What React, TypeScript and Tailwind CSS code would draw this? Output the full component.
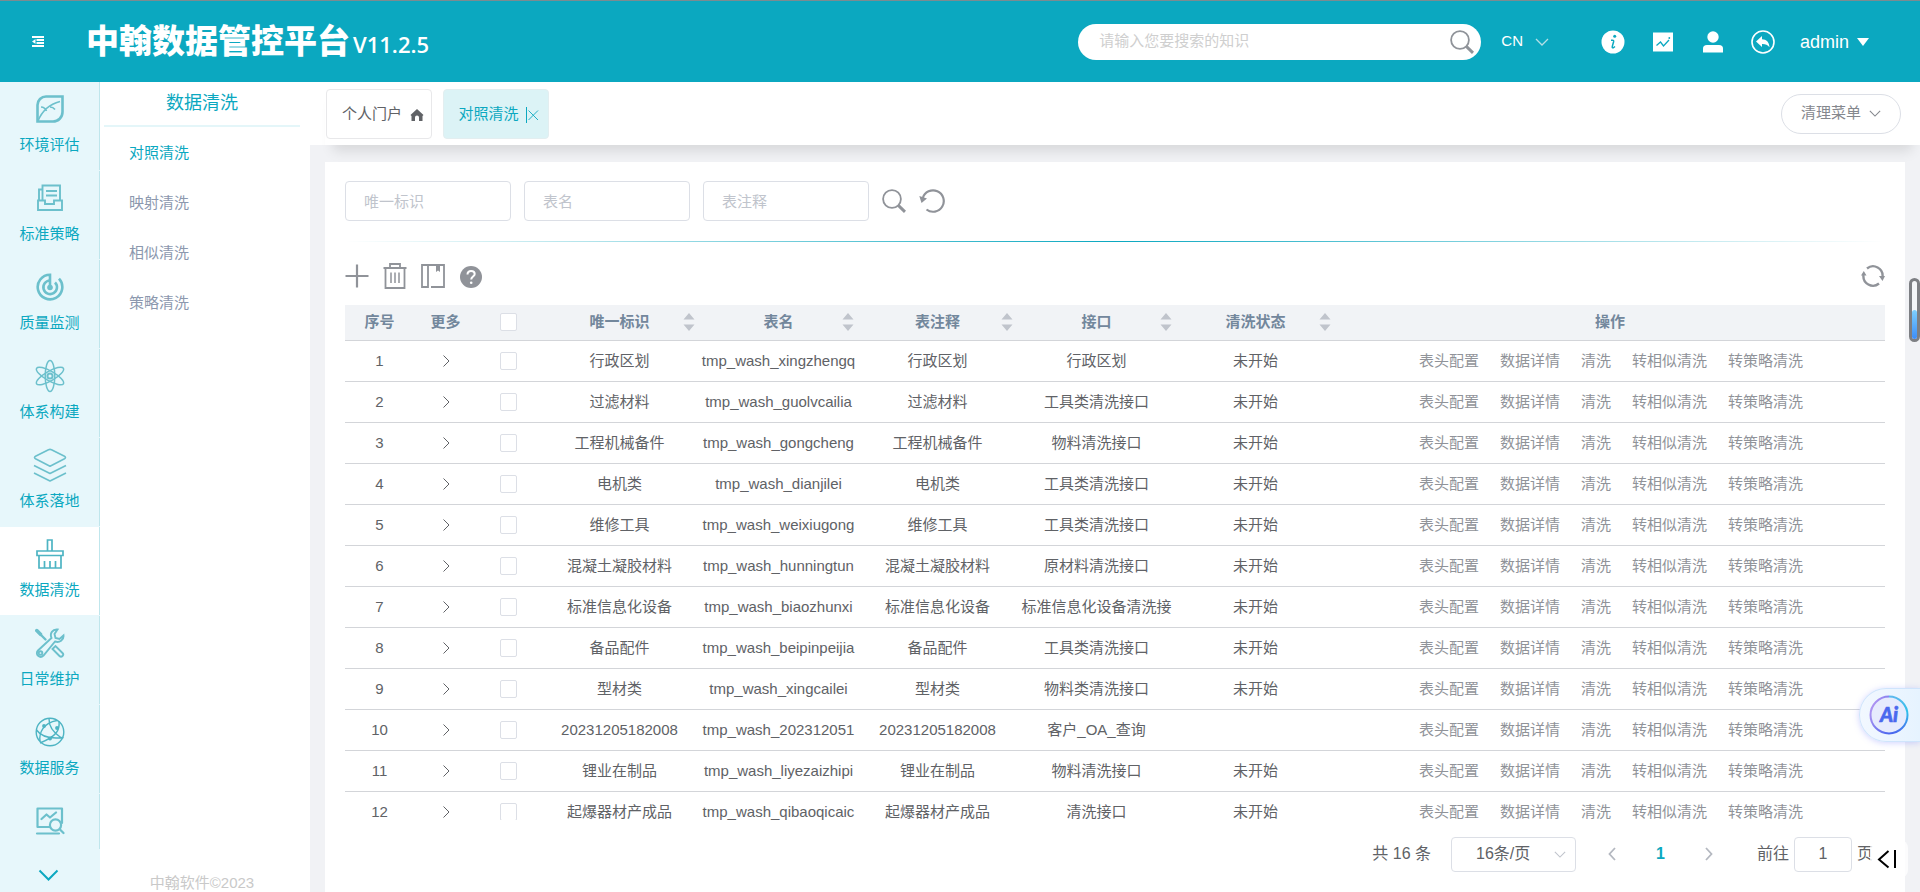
import React, { useState } from 'react';

interface WashRow {
  id: string;
  table: string;
  note: string;
  api: string;
  status: string;
}

const rows: WashRow[] = [
  { id: '行政区划', table: 'tmp_wash_xingzhengq', note: '行政区划', api: '行政区划', status: '未开始' },
  { id: '过滤材料', table: 'tmp_wash_guolvcailia', note: '过滤材料', api: '工具类清洗接口', status: '未开始' },
  { id: '工程机械备件', table: 'tmp_wash_gongcheng', note: '工程机械备件', api: '物料清洗接口', status: '未开始' },
  { id: '电机类', table: 'tmp_wash_dianjilei', note: '电机类', api: '工具类清洗接口', status: '未开始' },
  { id: '维修工具', table: 'tmp_wash_weixiugong', note: '维修工具', api: '工具类清洗接口', status: '未开始' },
  { id: '混凝土凝胶材料', table: 'tmp_wash_hunningtun', note: '混凝土凝胶材料', api: '原材料清洗接口', status: '未开始' },
  { id: '标准信息化设备', table: 'tmp_wash_biaozhunxi', note: '标准信息化设备', api: '标准信息化设备清洗接', status: '未开始' },
  { id: '备品配件', table: 'tmp_wash_beipinpeijia', note: '备品配件', api: '工具类清洗接口', status: '未开始' },
  { id: '型材类', table: 'tmp_wash_xingcailei', note: '型材类', api: '物料类清洗接口', status: '未开始' },
  { id: '20231205182008', table: 'tmp_wash_202312051', note: '20231205182008', api: '客户_OA_查询', status: '' },
  { id: '锂业在制品', table: 'tmp_wash_liyezaizhipi', note: '锂业在制品', api: '物料清洗接口', status: '未开始' },
  { id: '起爆器材产成品', table: 'tmp_wash_qibaoqicaic', note: '起爆器材产成品', api: '清洗接口', status: '未开始' },
];

const columns = ['唯一标识', '表名', '表注释', '接口', '清洗状态'];
const actions = ['表头配置', '数据详情', '清洗', '转相似清洗', '转策略清洗'];
const subMenus = ['对照清洗', '映射清洗', '相似清洗', '策略清洗'];

const LeafIcon = () => (
  <svg viewBox="0 0 28 28" className="size-7" fill="none" stroke="currentColor">
    <path d="M1.500 26.500V10a8.500 8.500 0 0 1 8.500-8.500h16.500V17a9.500 9.500 0 0 1-9.500 9.500z" strokeWidth="2.600" />
    <path d="M2 26C6 16 12 9.500 24 6.500M5 12c3 0 4.500 1.500 5.500 4M14 12c2 0 3.500.5 5 2.500" strokeWidth="1.600" />
  </svg>
);

const InboxIcon = () => (
  <svg viewBox="0 0 28 28" className="size-7" fill="none" stroke="currentColor" strokeWidth="1.900">
    <path d="M2 16.500h7v3.500h9v-3.500h8V26H2zM6.500 16V1.500H24V16M6.500 5.500H3V16M10 7h11M10 11.500h11" />
  </svg>
);

const RadarIcon = () => (
  <svg viewBox="0 0 28 28" className="size-7" fill="none" stroke="currentColor" strokeWidth="2.600">
    <path d="M14 14V1.700A12.300 12.300 0 1 0 23 5.600" />
    <path d="M14 7.500a6.800 6.800 0 1 0 5 2" />
    <circle cx="14" cy="14.500" r="2.800" fill="currentColor" stroke="none" />
  </svg>
);

const AtomIcon = () => (
  <svg viewBox="0 0 32 34" className="h-[34px] w-8" fill="none" stroke="currentColor" strokeWidth="1.500">
    <ellipse cx="16" cy="17" rx="4.800" ry="15.500" />
    <ellipse cx="16" cy="17" rx="4.800" ry="15.500" transform="rotate(60 16 17)" />
    <ellipse cx="16" cy="17" rx="4.800" ry="15.500" transform="rotate(120 16 17)" />
    <circle cx="16" cy="17" r="2.600" strokeWidth="2" />
  </svg>
);

const LayersIcon = () => (
  <svg viewBox="0 0 34 34" className="size-[34px]" fill="none" stroke="currentColor" strokeWidth="1.600" strokeLinejoin="round">
    <path d="M15.500 1.700 2.500 8.300q-2 1.200 0 2.400L17 18.300l14.500-7.600q2-1.200 0-2.400L18.500 1.700q-1.500-.7-3 0zM1 17.500l16 8 16-8M1 25l16 8 16-8" />
  </svg>
);

const BrushIcon = () => (
  <svg viewBox="0 0 28 30" className="h-[30px] w-7 text-[#4db4c3]" fill="none" stroke="currentColor" strokeWidth="1.700">
    <path d="M11.500 12V1h4.500v11M1 12h26v4.500H1zM3 16.500h22V29H3zM8.500 22v7M14 22v7M19.500 22v7" />
  </svg>
);

const ToolsIcon = () => (
  <svg viewBox="0 0 30 30" className="size-[30px]" fill="none" stroke="currentColor" strokeWidth="1.900" strokeLinecap="round">
    <path d="M22.500 1.500c-5-.5-8 4-6 8.500L3 22.500c-3.500 4 2 8.500 5.500 5L20 13.500c4.500 1.500 9-1.500 8.500-6l-4 3.500-4-1-1-4z" />
    <circle cx="5.500" cy="25" r="1.800" />
    <path d="m3 4 7.500 7.500" strokeWidth="2.400" />
    <path d="m1.800 2.600 3.700 3.700" strokeWidth="3.500" />
    <path d="m17.500 21 3-3 7 7c2 2-1 5-3 3z" />
  </svg>
);

const GlobeIcon = () => (
  <svg viewBox="0 0 30 30" className="size-[30px] text-[#4db4c3]" fill="none" stroke="currentColor" strokeWidth="1.400">
    <circle cx="15" cy="15" r="13.800" />
    <path d="M14 1.500c-.5 8 4 14 13 20M24 4c1 9-2 15-19 22M5 24C4 16 8 6 22 3.500M1.500 13c5 7 15 9 27 7.500" />
    <circle cx="9" cy="9" r="1.900" fill="currentColor" stroke="none" />
    <circle cx="22" cy="11" r="1.900" fill="currentColor" stroke="none" />
    <circle cx="15" cy="21.500" r="2" fill="currentColor" stroke="none" />
  </svg>
);

const ReportIcon = () => (
  <svg viewBox="0 0 30 30" className="size-[30px]" fill="none" stroke="currentColor" strokeWidth="2.200" strokeLinecap="round" strokeLinejoin="round">
    <path d="M15 21H2.500V2.500H27V17M6.500 13l5-4.500 3.500 3L21 6.500M2 27.500h22M25 23.500l3.500 3.500" />
    <circle cx="20.500" cy="19" r="5.600" />
  </svg>
);

const sideItems: { label: string; Icon: () => React.JSX.Element }[] = [
  { label: '环境评估', Icon: LeafIcon },
  { label: '标准策略', Icon: InboxIcon },
  { label: '质量监测', Icon: RadarIcon },
  { label: '体系构建', Icon: AtomIcon },
  { label: '体系落地', Icon: LayersIcon },
  { label: '数据清洗', Icon: BrushIcon },
  { label: '日常维护', Icon: ToolsIcon },
  { label: '数据服务', Icon: GlobeIcon },
];

const SearchIcon = () => (
  <svg viewBox="0 0 24 24" className="size-6" fill="none" stroke="currentColor">
    <circle cx="10" cy="10" r="8.900" strokeWidth="1.800" />
    <path d="m16.300 16.300 6.700 6.500" strokeWidth="3" />
  </svg>
);

const Chevron = ({ className }: { className: string }) => (
  <svg viewBox="0 0 14 8" className={className} fill="none" stroke="currentColor" strokeWidth="1.300">
    <path d="m1 1 6 6 6-6" />
  </svg>
);

const SortCaret = () => (
  <svg viewBox="0 0 12 18" className="h-[18px] w-3 shrink-0 fill-[#c0c4cc]">
    <path d="M6 0l5.500 6.500H.5zM6 18l5.500-6.500H.5z" />
  </svg>
);

function Header() {
  return (
    <header className="flex h-[82px] shrink-0 items-center border-t border-[#7c8b90] bg-[#0ba8c0] text-white">
      <button aria-label="折叠菜单" className="ml-8 shrink-0">
        <svg viewBox="0 0 12 11" className="h-[11px] w-3" fill="none" stroke="currentColor" strokeWidth="1.800">
          <path d="M0 1h12M4.500 4h7.500M4.500 7h7.500M0 10h12" />
          <path d="M3.500 3v5L0 5.500z" fill="currentColor" stroke="none" />
        </svg>
      </button>
      <h1 className="mt-[2px] ml-[42px] flex items-baseline gap-[3px] whitespace-nowrap text-[33px] leading-10 font-black">
        中翰数据管控平台
        <span className="font-['Open_Sans',sans-serif] text-[22px] font-semibold">V11.2.5</span>
      </h1>
      <div className="ml-auto flex h-9 w-[403px] items-center rounded-full bg-white pr-[7px] pl-[21px]">
        <input
          aria-label="搜索知识"
          placeholder="请输入您要搜索的知识"
          className="min-w-0 flex-1 text-[15px] text-[#606266] outline-none placeholder:text-[#cfcfcf]"
        />
        <button aria-label="搜索" className="text-[#8f9399]"><SearchIcon /></button>
      </div>
      <button className="ml-5 flex items-center gap-3 text-[15px]">
        CN
        <Chevron className="h-2 w-[14px] text-[#b5dfe6]" />
      </button>
      <nav className="ml-[52px] flex items-center gap-[26px]">
        <button aria-label="信息">
          <svg viewBox="0 0 24 24" className="size-6">
            <circle cx="12" cy="12" r="11.500" fill="#fff" />
            <circle cx="13.700" cy="6.300" r="1.500" fill="#0ba8c0" />
            <path d="M10 10.200h1.500q1.500 0 1.100 1.600l-1.300 4.600q-.4 1.600 1 1.400l1.700-1.300" fill="none" stroke="#0ba8c0" strokeWidth="1.500" />
          </svg>
        </button>
        <button aria-label="统计">
          <svg viewBox="0 0 24 24" className="size-6">
            <path d="M2 2.500h20v19H2z" fill="#fff" />
            <path d="m5.500 15.500 4-3.500 3 4 5.500-6" fill="none" stroke="#0ba8c0" strokeWidth="1.300" />
            <circle cx="18.300" cy="8" r=".9" fill="#0ba8c0" />
          </svg>
        </button>
        <button aria-label="用户">
          <svg viewBox="0 0 24 24" className="size-6" fill="#fff">
            <circle cx="12" cy="7" r="5.700" />
            <path d="M2 22.500V18.500q0-3.500 4-3.500h12q4 0 4 3.500v4z" />
          </svg>
        </button>
        <button aria-label="返回">
          <svg viewBox="0 0 24 24" className="size-6">
            <circle cx="12" cy="12" r="11" fill="none" stroke="#fff" strokeWidth="1.600" />
            <path d="m5 11.500 6-5.500v3.300c4.500.2 7 2.700 7.500 8-2-2.500-4-3.500-7.500-3.400V17z" fill="#fff" />
          </svg>
        </button>
      </nav>
      <button className="mr-[51px] ml-[25px] flex items-center gap-2 text-lg">
        admin
        <svg viewBox="0 0 12 8" className="h-2 w-3 fill-white"><path d="M0 0h12L6 8z" /></svg>
      </button>
    </header>
  );
}

function Sidebar() {
  return (
    <aside className="flex w-[100px] shrink-0 flex-col bg-[#e7f7fb]">
      <nav className="min-h-0 flex-1 overflow-hidden">
        {sideItems.map(({ label, Icon }) => (
          <a
            key={label}
            href="#"
            className={`mb-px flex h-[88px] flex-col items-center border-r border-[#bfe6ec] pt-[9px] text-[#6cc0cc] ${
              label === '数据清洗' ? 'bg-white' : ''
            }`}
          >
            <span className="flex h-9 items-center"><Icon /></span>
            <span className="mt-2 text-[15px] leading-5 text-[#0ba8c0]">{label}</span>
          </a>
        ))}
        <a href="#" aria-label="数据报告" className="flex h-[88px] flex-col items-center border-r border-[#bfe6ec] pt-[9px] text-[#6cc0cc]">
          <span className="flex h-9 items-center"><ReportIcon /></span>
        </a>
      </nav>
      <button aria-label="更多菜单" className="flex h-[43px] items-center justify-center pt-[9px] pr-[3px] text-[#0ba8c0]">
        <Chevron className="h-3 w-[21px]" />
      </button>
    </aside>
  );
}

function SubMenu() {
  return (
    <aside className="flex w-[210px] shrink-0 flex-col bg-white">
      <h2 className="mr-[10px] ml-1 h-[45px] border-b-2 border-[#e4f6f9] pt-[9px] text-center text-lg leading-6 text-[#0ba8c0]">
        数据清洗
      </h2>
      <nav className="flex flex-col pt-px pl-[29px] text-[15px] leading-[50px] text-[#8c98ae]">
        {subMenus.map((m, i) => (
          <a key={m} href="#" className={i === 0 ? 'text-[#0ba8c0]' : ''}>{m}</a>
        ))}
      </nav>
      <footer className="mt-auto pr-[6px] text-center text-[15px] leading-[18px] text-[#c9c9c9]">中翰软件©2023</footer>
    </aside>
  );
}

function TabBar() {
  return (
    <div className="shrink-0 bg-white">
      <div className="ml-[15px] flex h-[63px] items-center bg-white pr-[19px] pl-px shadow-[0_14px_12px_-8px_rgba(0,0,0,0.11)]">
        <button className="flex h-[50px] w-[106px] items-center justify-center gap-2 rounded border border-[#e8e8ea] pt-[2px] pl-2 text-[15px] text-[#606266]">
          个人门户
          <svg viewBox="0 0 14 12" className="h-3 w-[14px] fill-current">
            <path d="M7 0l6.500 6-1 1V12H9V8.500a2 2 0 0 0-4 0V12H1.500V7l-1-1z" />
          </svg>
        </button>
        <button className="ml-[11px] flex h-[50px] w-[106px] items-center justify-center gap-[6px] rounded border border-[#e3eef0] bg-[#dcf3f6] pt-[2px] pl-[5px] text-[15px] text-[#0ba8c0]">
          对照清洗
          <svg viewBox="0 0 14 16" className="h-4 w-[14px]" fill="none" stroke="currentColor">
            <path d="M1.500 0v16" />
            <path d="m3.500 3.500 9.500 9.500M13 3.500 3.500 13" strokeWidth=".9" />
          </svg>
        </button>
        <button className="ml-auto flex h-10 w-[120px] items-center justify-center gap-2 rounded-full border border-[#dcdfe6] text-[15px] text-[#85888e]">
          清理菜单
          <Chevron className="h-[7px] w-3" />
        </button>
      </div>
    </div>
  );
}

const checkboxClass = 'block mx-auto h-[18px] w-[17px] appearance-none rounded-xs border border-[#dcdfe6] bg-white checked:bg-[#0ba8c0]';

function WashTable() {
  return (
    <div className="min-h-0 flex-1 overflow-hidden">
      <table className="w-full table-fixed border-collapse text-center text-[15px] leading-5 whitespace-nowrap text-[#606266]">
        <colgroup>
          <col className="w-[69px]" />
          <col className="w-[63px]" />
          <col className="w-[63px]" />
          <col className="w-[159px]" />
          <col className="w-[159px]" />
          <col className="w-[159px]" />
          <col className="w-[159px]" />
          <col className="w-[159px]" />
          <col />
        </colgroup>
        <thead>
          <tr className="h-[35px] border-b border-[#d3d5d9] bg-[#f1f3f6] text-[#73879c]">
            <th>序号</th>
            <th>更多</th>
            <th><input type="checkbox" aria-label="全选" className={checkboxClass} /></th>
            {columns.map((c) => (
              <th key={c}>
                <div className="flex items-center px-1">
                  <span className="w-3" />
                  <span className="flex-1">{c}</span>
                  <SortCaret />
                </div>
              </th>
            ))}
            <th>操作</th>
          </tr>
        </thead>
        <tbody>
          {rows.map((r, i) => (
            <tr key={r.table} className="h-[41px] border-b border-[#d3d5d9]">
              <td>{i + 1}</td>
              <td>
                <button aria-label="展开" className="block mx-auto">
                  <svg viewBox="0 0 8 12" className="h-3 w-2" fill="none" stroke="currentColor">
                    <path d="m1.500.5 5.500 5.500-5.500 5.500" />
                  </svg>
                </button>
              </td>
              <td><input type="checkbox" aria-label={`选择 ${r.id}`} className={checkboxClass} /></td>
              <td>{r.id}</td>
              <td>{r.table}</td>
              <td>{r.note}</td>
              <td>{r.api}</td>
              <td>{r.status}</td>
              <td>
                <div className="flex justify-center gap-[21px] pl-[2px] text-[#909399]">
                  {actions.map((a) => (
                    <button key={a}>{a}</button>
                  ))}
                </div>
              </td>
            </tr>
          ))}
        </tbody>
      </table>
    </div>
  );
}

function Pagination() {
  const [page, setPage] = useState('1');

  return (
    <div className="flex h-[72px] shrink-0 items-center justify-end pr-3 pb-1 text-base text-[#606266]">
      <span>共 16 条</span>
      <div className="ml-5 grid items-center">
        <select
          aria-label="每页条数"
          className="col-start-1 row-start-1 h-[35px] w-[125px] appearance-none rounded border border-[#dcdfe6] pl-6"
        >
          <option>16条/页</option>
        </select>
        <Chevron className="pointer-events-none col-start-1 row-start-1 mr-[10px] h-[7px] w-3 justify-self-end text-[#c0c4cc]" />
      </div>
      <button aria-label="上一页" className="ml-8 text-[#b4b8c0]">
        <svg viewBox="0 0 8 14" className="h-[14px] w-2" fill="none" stroke="currentColor" strokeWidth="1.800"><path d="M7 1 1.500 7 7 13" /></svg>
      </button>
      <button className="ml-10 font-bold text-[#0ba8c0]">1</button>
      <button aria-label="下一页" className="ml-10 text-[#b4b8c0]">
        <svg viewBox="0 0 8 14" className="h-[14px] w-2" fill="none" stroke="currentColor" strokeWidth="1.800"><path d="m1 1 5.500 6L1 13" /></svg>
      </button>
      <label className="ml-11 flex items-center">
        前往
        <input
          value={page}
          onChange={(e) => setPage(e.target.value)}
          className="mx-[5px] h-[35px] w-[58px] rounded border border-[#dcdfe6] text-center outline-none"
        />
        页
      </label>
    </div>
  );
}

const filterClass = 'h-10 w-[166px] rounded border border-[#dcdfe6] pl-[18px] text-[15px] outline-none placeholder:text-[#c0c4cc]';

function WashPanel() {
  return (
    <section className="mx-[15px] mt-[17px] flex min-h-0 flex-1 flex-col bg-white px-5 pt-[19px]">
      <form className="flex items-center gap-[13px]">
        <input aria-label="唯一标识" placeholder="唯一标识" className={filterClass} />
        <input aria-label="表名" placeholder="表名" className={filterClass} />
        <input aria-label="表注释" placeholder="表注释" className={filterClass} />
        <button type="button" aria-label="查询" className="text-[#909399]"><SearchIcon /></button>
        <button type="reset" aria-label="重置" className="text-[#909399]">
          <svg viewBox="0 0 26 24" className="h-6 w-[26px]" fill="none" stroke="currentColor" strokeWidth="2.200">
            <path d="M3.800 9A10.700 10.700 0 1 1 7.500 20.500" />
            <path d="M.3 7 2.500 14l5.500-4.500z" fill="currentColor" stroke="none" />
          </svg>
        </button>
      </form>
      <div className="mt-5 h-px shrink-0 bg-linear-to-r from-transparent via-[#0ba8c0] to-transparent" />
      <div className="mt-5 mb-[15px] flex h-7 shrink-0 items-center gap-[14px] text-[#909399]">
        <button aria-label="新增">
          <svg viewBox="0 0 24 24" className="size-6" fill="none" stroke="currentColor" strokeWidth="2.200"><path d="M12 .5v23M.5 12h23" /></svg>
        </button>
        <button aria-label="删除">
          <svg viewBox="0 0 24 26" className="h-[26px] w-6" fill="none" stroke="currentColor" strokeWidth="1.800">
            <path d="M.5 5h23M7 5V1h10v4M2.500 5v20h19V5" />
            <path d="M8 9.500V20M12 9.500V20M16 9.500V20" strokeWidth="1.500" />
          </svg>
        </button>
        <button aria-label="目录">
          <svg viewBox="0 0 24 24" className="size-6" fill="none" stroke="currentColor" strokeWidth="1.800">
            <path d="M7 1H1v22h6zM10 23h13V1H7" />
            <path d="M15 1h4v7l-2-1.500L15 8z" fill="currentColor" stroke="none" />
          </svg>
        </button>
        <button aria-label="帮助" className="mt-[2px]">
          <svg viewBox="0 0 24 24" className="size-6">
            <circle cx="12" cy="12" r="11" fill="currentColor" />
            <path d="M8.500 9.500c0-5 7.200-4.500 7.200-.5 0 2.500-3.500 2.700-3.500 5.500" fill="none" stroke="#fff" strokeWidth="2" />
            <circle cx="12.200" cy="17.800" r="1.300" fill="#fff" />
          </svg>
        </button>
        <button aria-label="刷新" className="ml-auto">
          <svg viewBox="0 0 24 24" className="size-6" fill="none" stroke="currentColor" strokeWidth="2.400">
            <path d="M6 4.500A9.500 9.500 0 0 1 21.500 13M18 19.500A9.500 9.500 0 0 1 2.500 11" />
            <path d="M18 12h6l-2.500 5zM0 11.500h5.500L2.800 7z" fill="currentColor" stroke="none" />
          </svg>
        </button>
      </div>
      <WashTable />
      <Pagination />
    </section>
  );
}

function FloatingTools() {
  return (
    <>
      <div className="absolute top-[278px] right-0 flex h-16 w-[11px] items-end rounded-full border-3 border-[#7d7f83] bg-[#f4f6f8]">
        <span className="h-[29px] w-full rounded-full bg-linear-to-b from-[#7fd0fb] to-[#3c8cf8]" />
      </div>
      <button
        aria-label="AI 助手"
        className="absolute right-0 bottom-[150px] flex h-[54px] w-[61px] items-center rounded-l-full border border-r-0 border-[#cfe4fc] bg-linear-to-r from-[#f2f8ff] to-[#e6f3ff] pl-[9px] shadow-[0_1px_6px_rgba(120,130,255,0.35)]"
      >
        <svg viewBox="0 0 40 40" className="size-10">
          <defs>
            <linearGradient id="ring" x1="0" y1="0" x2="1" y2="1">
              <stop offset="0" stopColor="#c39df2" />
              <stop offset="1" stopColor="#4a66ee" />
            </linearGradient>
            <linearGradient id="ringRight" x1="0" y1="0" x2="0" y2="1">
              <stop offset="0" stopColor="#5cb9ee" />
              <stop offset=".4" stopColor="#2fc0ea" />
              <stop offset="1" stopColor="#4a66ee" />
            </linearGradient>
          </defs>
          <circle cx="20" cy="20" r="18.500" fill="#e6ebfd" />
          <path d="M20 1.500a18.500 18.500 0 0 0 0 37" fill="none" stroke="url(#ring)" strokeWidth="2" />
          <path d="M20 1.500a18.500 18.500 0 0 1 0 37" fill="none" stroke="url(#ringRight)" strokeWidth="2" />
          <text x="20" y="27" textAnchor="middle" fontSize="20" fontWeight="900" fontStyle="italic" fontFamily="Lato, sans-serif" fill="#4a68ee" stroke="#4a68ee" strokeWidth=".6">
            Ai
          </text>
        </svg>
      </button>
      <button
        aria-label="收起"
        className="absolute right-3 bottom-[14px] flex h-[38px] w-[38px] items-center justify-center rounded-lg bg-white/80 pr-[5px] text-black"
      >
        <svg viewBox="0 0 20 20" className="size-5" fill="none" stroke="currentColor" strokeWidth="2">
          <path d="M11.500 2 2 10.500l9.500 8M18 1v18" />
        </svg>
      </button>
    </>
  );
}

export default function App() {
  return (
    <div className="relative flex h-screen flex-col overflow-hidden bg-[#f1f2f5] font-['Liberation_Sans','Noto_Sans_CJK_SC',sans-serif]">
      <Header />
      <div className="flex min-h-0 flex-1">
        <Sidebar />
        <SubMenu />
        <main className="flex min-w-0 flex-1 flex-col">
          <TabBar />
          <WashPanel />
        </main>
      </div>
      <FloatingTools />
    </div>
  );
}
